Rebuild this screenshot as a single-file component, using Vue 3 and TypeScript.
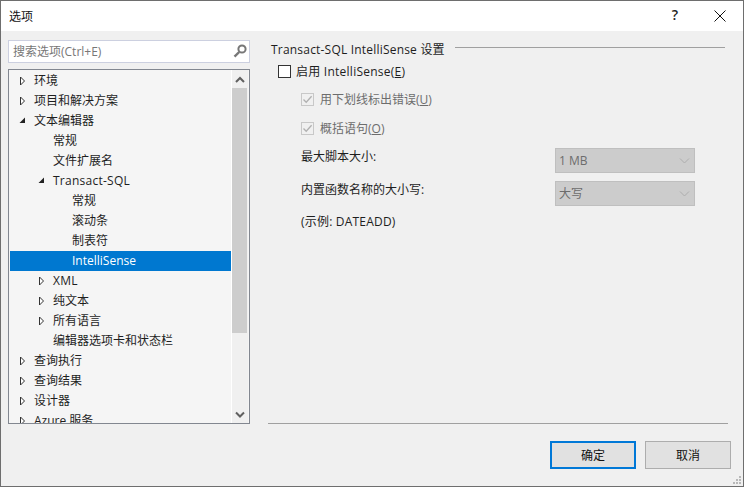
<template>
  <div class="dialog">
    <header class="titlebar">
      <span class="title">选项</span>
      <span class="help">?</span>
      <svg class="close" width="14" height="14" viewBox="0 0 14 14">
        <path d="M1.5 1.5 12.5 12.5M12.5 1.5 1.5 12.5" stroke="#111" stroke-width="1" fill="none" />
      </svg>
    </header>

    <div class="body">
      <aside class="left">
        <div class="search">
          <span class="search-text">搜索选项(Ctrl+E)</span>
          <svg width="14" height="14" viewBox="0 0 14 14">
            <circle cx="9" cy="5" r="3.6" fill="none" stroke="#777" stroke-width="2" />
            <path d="M6.2 8 1.5 12.7" stroke="#777" stroke-width="2.4" fill="none" />
          </svg>
        </div>

        <div class="tree">
          <ul class="rows">
            <li
              v-for="(row, i) in rows"
              :key="i"
              class="row"
              :class="{ selected: row.selected, wide: row.wide, ['lv' + row.level]: true }"
            >
              <span class="arrow">
                <svg v-if="row.state === 'closed'" width="7" height="10" viewBox="0 0 7 10">
                  <path d="M1.5 1 5.5 5 1.5 9Z" fill="#fff" stroke="#333" stroke-width="1" />
                </svg>
                <svg v-else-if="row.state === 'open'" width="7" height="7" viewBox="0 0 7 7">
                  <path d="M6 0.5V6H0.5Z" fill="#222" />
                </svg>
              </span>
              <span class="label">{{ row.label }}</span>
            </li>
          </ul>
          <div class="scrollbar">
            <svg class="sb-btn" width="16" height="18" viewBox="0 0 16 18">
              <path d="M4 12 8 8 12 12" fill="none" stroke="#606060" stroke-width="2" />
            </svg>
            <div class="sb-track"><div class="sb-thumb"></div></div>
            <svg class="sb-btn" width="16" height="18" viewBox="0 0 16 18">
              <path d="M4 7.5 8 11.5 12 7.5" fill="none" stroke="#606060" stroke-width="2" />
            </svg>
          </div>
        </div>
      </aside>

      <main class="right">
        <div class="heading">
          <span class="heading-text">Transact-SQL IntelliSense 设置</span>
          <div class="rule"></div>
        </div>

        <label class="enable">
          <span class="box"></span>
          <span class="enable-text">启用 IntelliSense(<u>E</u>)</span>
        </label>

        <label class="sub">
          <span class="box checked">
            <svg width="11" height="11" viewBox="0 0 11 11">
              <path d="M1.5 5.5 4.2 8.3 9.6 2.2" fill="none" stroke="#b0b0b0" stroke-width="1.3" />
            </svg>
          </span>
          <span>用下划线标出错误(<u>U</u>)</span>
        </label>
        <label class="sub second">
          <span class="box checked">
            <svg width="11" height="11" viewBox="0 0 11 11">
              <path d="M1.5 5.5 4.2 8.3 9.6 2.2" fill="none" stroke="#b0b0b0" stroke-width="1.3" />
            </svg>
          </span>
          <span>概括语句(<u>O</u>)</span>
        </label>

        <div class="field first">
          <span>最大脚本大小:</span>
          <div class="select">
            <span>1 MB</span>
            <svg width="11" height="6" viewBox="0 0 11 6">
              <path d="M1 0.5 5.5 5 10 0.5" fill="none" stroke="#adadad" stroke-width="1" />
            </svg>
          </div>
        </div>
        <div class="field">
          <span>内置函数名称的大小写:</span>
          <div class="select">
            <span>大写</span>
            <svg width="11" height="6" viewBox="0 0 11 6">
              <path d="M1 0.5 5.5 5 10 0.5" fill="none" stroke="#adadad" stroke-width="1" />
            </svg>
          </div>
        </div>
        <div class="example">(示例: DATEADD)</div>

        <div class="spacer"></div>
        <div class="bottom-rule"></div>
      </main>
    </div>

    <footer class="footer">
      <button class="btn primary">确定</button>
      <button class="btn">取消</button>
    </footer>

    <svg class="grip" width="9" height="9" viewBox="0 0 9 9">
      <path d="M6 0h2v2H6zM3 3h2v2H3zM6 3h2v2H6zM0 6h2v2H0zM3 6h2v2H3zM6 6h2v2H6z" fill="#b8b8b8" />
    </svg>
  </div>
</template>

<script setup lang="ts">
interface TreeRow {
  label: string
  level: number
  state?: 'open' | 'closed'
  selected?: boolean
  wide?: boolean
}

const rows: TreeRow[] = [
  { label: '环境', level: 0, state: 'closed' },
  { label: '项目和解决方案', level: 0, state: 'closed' },
  { label: '文本编辑器', level: 0, state: 'open' },
  { label: '常规', level: 1 },
  { label: '文件扩展名', level: 1 },
  { label: 'Transact-SQL', level: 1, state: 'open', wide: true },
  { label: '常规', level: 2 },
  { label: '滚动条', level: 2 },
  { label: '制表符', level: 2 },
  { label: 'IntelliSense', level: 2, selected: true },
  { label: 'XML', level: 1, state: 'closed', wide: true },
  { label: '纯文本', level: 1, state: 'closed' },
  { label: '所有语言', level: 1, state: 'closed' },
  { label: '编辑器选项卡和状态栏', level: 1 },
  { label: '查询执行', level: 0, state: 'closed' },
  { label: '查询结果', level: 0, state: 'closed' },
  { label: '设计器', level: 0, state: 'closed' },
  { label: 'Azure 服务', level: 0, state: 'closed' }
]
</script>

<style>
html,
body {
  margin: 0;
  overflow: hidden;
}
</style>

<style scoped>
.dialog {
  position: relative;
  box-sizing: border-box;
  width: 744px;
  height: 487px;
  display: flex;
  flex-direction: column;
  background: #f0f0f0;
  border: 1px solid #6e6e6e;
  font-family: "Open Sans", "Noto Sans CJK SC", sans-serif;
  font-size: 12px;
  color: #1e1e1e;
}

/* 标题栏 */
.titlebar {
  box-sizing: border-box;
  height: 30px;
  flex: none;
  display: flex;
  align-items: center;
  background: #fff;
  padding: 0 16px 1px 8px;
}

.title {
  flex: 1;
  color: #111;
}

.help {
  margin: 0 35px 2px 0;
  font-size: 14px;
  font-weight: 600;
  color: #222;
}

/* 主体 */
.body {
  flex: 1;
  min-height: 0;
  display: flex;
  padding: 9px 15px 0 7px;
}

.left {
  width: 242px;
  flex: none;
  display: flex;
  flex-direction: column;
}

.search {
  box-sizing: border-box;
  height: 23px;
  display: flex;
  align-items: center;
  justify-content: space-between;
  padding: 0 2px 0 4px;
  background: #fff;
  border: 1px solid #ccd0e0;
  color: #777;
}

.tree {
  box-sizing: border-box;
  height: 356px;
  margin-top: 6px;
  display: flex;
  background: #f5f5f5;
  border: 1px solid #828790;
  overflow: hidden;
}

.rows {
  list-style: none;
  margin: 0;
  padding: 1px 0 0 1px;
  width: 221px;
  flex: none;
}

.row {
  height: 20px;
  display: flex;
  align-items: center;
  line-height: 20px;
  white-space: nowrap;
}

.row.wide {
  letter-spacing: 0.25px;
}

.row.lv0 {
  padding-left: 9px;
}

.row.lv1 {
  padding-left: 28px;
}

.row.lv2 {
  padding-left: 47px;
}

.row.selected {
  background: #0078d0;
  color: #fff;
}

.arrow {
  width: 15px;
  flex: none;
  display: flex;
  align-items: center;
}

/* 滚动条 */
.scrollbar {
  width: 16px;
  flex: none;
  display: flex;
  flex-direction: column;
  background: #f0f0f0;
  border-left: 1px solid #fff;
}

.sb-btn {
  flex: none;
}

.sb-track {
  flex: 1;
}

.sb-thumb {
  width: 15px;
  height: 245px;
  background: #cdcdcd;
}

/* 右侧 */
.right {
  flex: 1;
  min-width: 0;
  display: flex;
  flex-direction: column;
  padding-left: 18px;
}

.heading {
  display: flex;
  align-items: center;
  height: 18px;
  margin-left: 3px;
  gap: 10px;
}

.heading-text {
  letter-spacing: 0.2px;
}

.rule {
  flex: 1;
  height: 1px;
  margin: 0 3px 4px 0;
  background: #a0a0a0;
}

.enable,
.sub {
  display: flex;
  align-items: center;
  height: 18px;
}

.enable {
  margin: 4px 0 0 10px;
  gap: 5px;
}

.enable-text {
  letter-spacing: 0.25px;
}

.sub {
  margin: 10px 0 0 33px;
  gap: 6px;
  color: #6d6d6d;
}

.sub.second {
  margin-top: 11px;
}

.box {
  box-sizing: border-box;
  width: 13px;
  height: 13px;
  flex: none;
  display: flex;
  align-items: center;
  justify-content: center;
  background: #fff;
  border: 1px solid #333;
}

.box.checked {
  background: #f0f0f0;
  border-color: #c8c8c8;
}

.field {
  display: flex;
  align-items: flex-start;
  justify-content: space-between;
  height: 25px;
  margin: 8px 33px 0 33px;
  line-height: 18px;
}

.field.first {
  margin-top: 11px;
}

.select {
  box-sizing: border-box;
  width: 140px;
  height: 25px;
  display: flex;
  align-items: center;
  justify-content: space-between;
  padding: 0 4px 0 3px;
  background: #cccccc;
  border: 1px solid #bfbfbf;
  color: #6d6d6d;
}

.example {
  margin: 7px 0 0 33px;
  line-height: 18px;
  letter-spacing: 0.2px;
}

.spacer {
  flex: 1;
}

.bottom-rule {
  height: 1px;
  background: #a0a0a0;
}

/* 底部按钮 */
.footer {
  height: 62px;
  flex: none;
  box-sizing: border-box;
  display: flex;
  justify-content: flex-end;
  gap: 9px;
  padding: 17px 12px 0 0;
}

.btn {
  box-sizing: border-box;
  width: 86px;
  height: 28px;
  padding: 0;
  background: #e1e1e1;
  border: 1px solid #adadad;
  font: inherit;
  color: #111;
}

.btn.primary {
  border: 2px solid #0078d7;
}

.close {
  flex: none;
}

.grip {
  position: absolute;
  right: 1px;
  bottom: 1px;
}
</style>
